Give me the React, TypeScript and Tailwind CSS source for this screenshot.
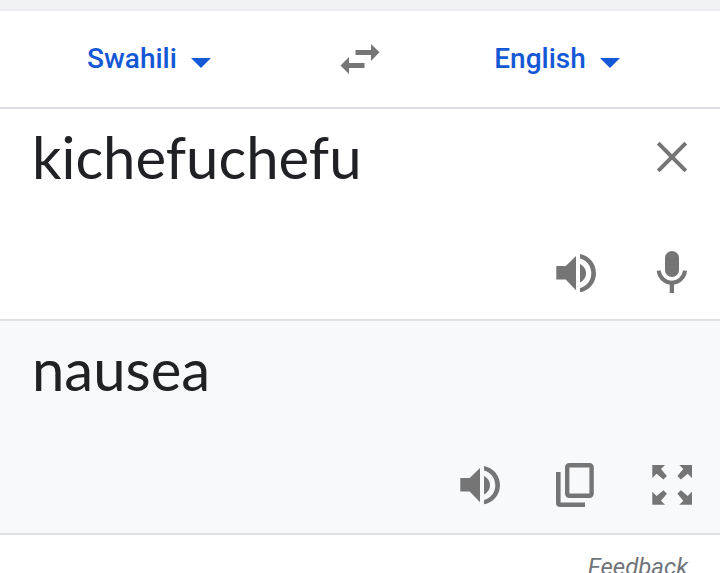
import { useState } from 'react'
import type { ReactNode } from 'react'

// Types
interface IconButtonProps {
  label: string
  onClick?: () => void
  children: ReactNode
}

interface LanguageSelectProps {
  id: string
  label: string
  value: string
  onChange: (value: string) => void
}

const LANGUAGES = ['English', 'French', 'German', 'Spanish', 'Swahili']

function IconButton({ label, onClick, children }: IconButtonProps) {
  return (
    <button type="button" aria-label={label} onClick={onClick} className="size-12 shrink-0 text-[#757575]">
      <svg viewBox="0 0 48 48" className="size-12" fill="currentColor" aria-hidden="true">
        {children}
      </svg>
    </button>
  )
}

function SpeakerIcon() {
  return (
    <>
      <path d="M4.3 17H13.7L24 7V41.3L13.7 30.5H4.3Z" />
      <path d="M28 15C31.6 16.8 34 20.2 34 24.2S31.6 31.7 28 33.5Z" />
      <path d="M28 5C37 6.6 44 14.5 44 24.2S37 41.8 28 43.3V39C34.6 37.5 39.3 31.4 39.3 24.2S34.6 10.9 28 9.4Z" />
    </>
  )
}

function LanguageSelect({ id, label, value, onChange }: LanguageSelectProps) {
  return (
    <div className="flex flex-1 justify-center">
      <div className="relative">
        <select
          id={id}
          aria-label={label}
          value={value}
          onChange={e => onChange(e.target.value)}
          className="h-12 appearance-none bg-transparent pr-12 text-[28px] leading-10 font-medium text-[#1558d6] outline-none [field-sizing:content]"
        >
          {LANGUAGES.map(lang => (
            <option key={lang} value={lang}>{lang}</option>
          ))}
        </select>
        <svg viewBox="0 0 48 48" className="pointer-events-none absolute top-0 right-0 size-12" fill="#1558d6" aria-hidden="true">
          <path d="M14 23H34L24 33Z" />
        </svg>
      </div>
    </div>
  )
}

function App() {
  const [source, setSource] = useState('Swahili')
  const [target, setTarget] = useState('English')
  const [text, setText] = useState('kichefuchefu')
  const [translation, setTranslation] = useState('nausea')

  // Swap both the languages and the texts
  const swapLanguages = () => {
    setSource(target)
    setTarget(source)
    setText(translation)
    setTranslation(text)
  }

  const clearText = () => {
    setText('')
    setTranslation('')
  }

  return (
    <div className="h-screen overflow-hidden bg-white font-['Roboto',sans-serif]">
      <div className="h-[11px] border-b-2 border-[#ebecef] bg-[#f1f2f4]" />

      {/* Language bar */}
      <header className="flex h-24 items-center">
        <LanguageSelect id="source-lang" label="Translate from" value={source} onChange={setSource} />
        <div className="flex w-24 justify-center">
          <IconButton label="Swap languages" onClick={swapLanguages}>
            <path d="M19.5 15H35V9L43.5 17.3L35 26V20H19.5Z" />
            <path d="M28.5 33H13V39L4.5 30.5L13 22V28H28.5Z" />
          </IconButton>
        </div>
        <LanguageSelect id="target-lang" label="Translate to" value={target} onChange={setTarget} />
      </header>

      {/* Source text */}
      <section className="border-t-2 border-[#dfe0e5] pr-6 pb-[22px] pl-8">
        <div className="mb-11 flex h-24 items-center gap-6">
          <textarea
            aria-label="Source text"
            value={text}
            onChange={e => setText(e.target.value)}
            rows={1}
            spellCheck={false}
            className="h-[72px] min-w-0 flex-1 resize-none overflow-hidden bg-transparent font-['Lato',sans-serif] text-[58px] leading-[72px] text-[#202124] outline-none"
          />
          <IconButton label="Clear text" onClick={clearText}>
            <path d="M10.2 10.2L37.8 37.8M37.8 10.2L10.2 37.8" fill="none" stroke="currentColor" strokeWidth="4" />
          </IconButton>
        </div>
        <div className="flex justify-end gap-12">
          <IconButton label="Listen to source text">
            <SpeakerIcon />
          </IconButton>
          <IconButton label="Speak">
            <rect x="17" y="2" width="14" height="26" rx="7" />
            <path d="M10.7 21.7A13.2 13.2 0 0 0 37 21.7" fill="none" stroke="currentColor" strokeWidth="4" />
            <path d="M21.7 34H26V44H21.7Z" />
          </IconButton>
        </div>
      </section>

      {/* Translation */}
      <section className="border-t-2 border-[#dfe0e5] bg-[#f8f9fb] pr-6 pb-6 pl-8">
        <div className="mb-11 flex h-24 items-center">
          <p className="font-['Lato',sans-serif] text-[58px] leading-[72px] text-[#202124]">{translation}</p>
        </div>
        <div className="flex justify-end gap-12">
          <IconButton label="Listen to translation">
            <SpeakerIcon />
          </IconButton>
          <IconButton label="Copy translation">
            <rect x="15.2" y="4.2" width="24.4" height="30.6" rx="2" fill="none" stroke="currentColor" strokeWidth="4.4" />
            <path d="M6.3 11V41.7Q6.3 43.7 8.3 43.7H33" fill="none" stroke="currentColor" strokeWidth="4.6" />
          </IconButton>
          <IconButton label="Full screen">
            <path d="M4.3 4H17L13 8L18.9 14.9L15.4 18.4L8.6 12.8L4.3 17Z" />
            <path d="M44 4H31.3L35.3 8L29.4 14.9L32.9 18.4L39.7 12.8L44 17Z" />
            <path d="M4.3 43.7H17L13 39.7L18.9 32.8L15.4 29.3L8.6 34.9L4.3 30.7Z" />
            <path d="M44 43.7H31.3L35.3 39.7L29.4 32.8L32.9 29.3L39.7 34.9L44 30.7Z" />
          </IconButton>
        </div>
      </section>

      <footer className="flex justify-end border-t-2 border-[#dfe0e5] px-8 pt-4">
        <a href="#feedback" className="text-2xl text-[#70757a] italic">Feedback</a>
      </footer>
    </div>
  )
}

export default App
